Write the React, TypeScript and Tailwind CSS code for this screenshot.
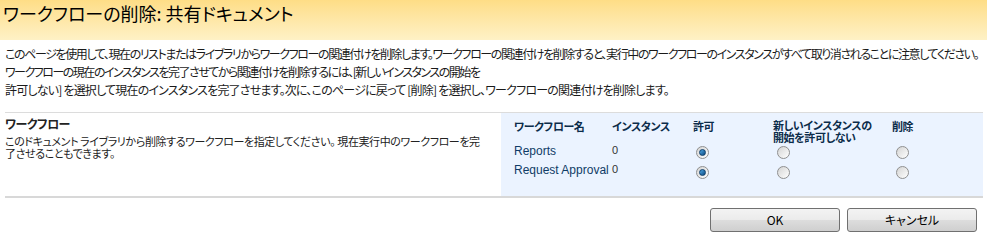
import React from 'react';

const jp = { fontFamily: '"Noto Sans CJK JP", "Liberation Sans", sans-serif' };

const Radio: React.FC<{ checked?: boolean }> = ({ checked }) => (
  <span className="w-[13px] h-[13px] rounded-full border border-[#8f8f8f] bg-gradient-to-br from-[#d4d4d4] to-[#ffffff] flex items-center justify-center">
    {checked && (
      <span className="w-[7px] h-[7px] rounded-full bg-gradient-to-br from-[#4fa9e8] to-[#0b4a80] border border-[#0d3e6b]" />
    )}
  </span>
);

const rows = [
  { name: 'Reports', count: 0 },
  { name: 'Request Approval', count: 0 },
];

export default function App() {
  return (
    <div className="w-[987px] h-[238px] overflow-hidden bg-white text-black [font-feature-settings:'palt']" style={jp}>
      {/* Title bar */}
      <div className="h-[40px] bg-gradient-to-b from-[#fedd86] to-[#fef1c6] px-[3px] pt-[2px]">
        <h1 className="text-[18px] leading-[22px] font-normal">ワークフローの削除: 共有ドキュメント</h1>
      </div>

      {/* Intro */}
      <div className="px-[5px] pt-[5px] text-[12px] leading-[18px] text-[#1a1a1a]">
        <p className="whitespace-nowrap tracking-[-1.4px]">
          このページを使用して、現在のリストまたはライブラリからワークフローの関連付けを削除します。ワークフローの関連付けを削除すると、実行中のワークフローのインスタンスがすべて取り消されることに注意してください。
        </p>
        <p className="whitespace-nowrap tracking-[-1.5px]">ワークフローの現在のインスタンスを完了させてから関連付けを削除するには、[新しいインスタンスの開始を</p>
        <p className="whitespace-nowrap tracking-[-0.8px]">許可しない] を選択して現在のインスタンスを完了させます。次に、このページに戻って [削除] を選択し、ワークフローの関連付けを削除します。</p>
      </div>

      {/* Section */}
      <div className="mx-[5px] w-[978px] mt-[13px] border-t border-[#dcdcdc] border-b-2 border-b-[#d8d8d8] flex h-[86px]">
        <div className="w-[496px] pt-[3px] pr-[12px]">
          <h3 className="text-[12px] leading-[16px] font-bold text-[#222] tracking-[-0.5px]">ワークフロー</h3>
          <p className="mt-[3px] text-[11px] leading-[12px] text-[#222] tracking-[-0.4px]">
            このドキュメント ライブラリから削除するワークフローを指定してください。 現在実行中のワークフローを完了させることもできます。
          </p>
        </div>
        <div className="flex-1 bg-[#ebf3ff] pl-[13px] pt-[5px]">
          <div className="grid grid-cols-[98px_81px_80px_119px_auto] text-[12px]">
            <div className="font-bold text-[11px] leading-[11px] pt-[3px] text-[#0b2c4a] whitespace-nowrap tracking-[-0.4px]">ワークフロー名</div>
            <div className="font-bold text-[11px] leading-[11px] pt-[3px] text-[#0b2c4a] whitespace-nowrap tracking-[-0.4px]">インスタンス</div>
            <div className="font-bold text-[11px] leading-[11px] pt-[3px] text-[#0b2c4a] whitespace-nowrap tracking-[-0.4px]">許可</div>
            <div className="font-bold text-[11px] leading-[12px] pt-[1px] text-[#0b2c4a] whitespace-nowrap tracking-[-0.4px]">
              <div>新しいインスタンスの</div>
              <div>開始を許可しない</div>
            </div>
            <div className="font-bold text-[11px] leading-[11px] pt-[3px] text-[#0b2c4a] whitespace-nowrap tracking-[-0.4px]">削除</div>
            {rows.map((r, i) => (
              <React.Fragment key={r.name}>
                <div className={`text-[#0f3b66] leading-[14px] whitespace-nowrap ${i === 0 ? 'pt-[1px]' : 'pt-[4px]'}`} style={{ fontFamily: '"Liberation Sans", sans-serif' }}>
                  {r.name}
                </div>
                <div className={`text-[#333] text-[11px] leading-[14px] ${i === 0 ? 'pt-[0px]' : 'pt-[3px]'}`} style={{ fontFamily: '"Liberation Sans", sans-serif' }}>
                  {r.count}
                </div>
                <div className={`pl-[3px] ${i === 0 ? 'pt-[3px]' : 'pt-[7px]'}`}>
                  <Radio checked />
                </div>
                <div className={`pl-[4px] ${i === 0 ? 'pt-[3px]' : 'pt-[7px]'}`}>
                  <Radio />
                </div>
                <div className={`pl-[4px] ${i === 0 ? 'pt-[3px]' : 'pt-[7px]'}`}>
                  <Radio />
                </div>
              </React.Fragment>
            ))}
          </div>
        </div>
      </div>

      {/* Buttons */}
      <div className="flex justify-end gap-[7px] pr-[10px] pt-[10px]">
        {['OK', 'キャンセル'].map((t) => (
          <button
            key={t}
            className="w-[130px] h-[24px] rounded-[3px] border border-[#707070] bg-[linear-gradient(to_bottom,#f3f3f3_0%,#ebebeb_50%,#dddddd_51%,#cfcfcf_100%)] text-[12px] leading-[22px] text-black"
          >
            {t}
          </button>
        ))}
      </div>
    </div>
  );
}
